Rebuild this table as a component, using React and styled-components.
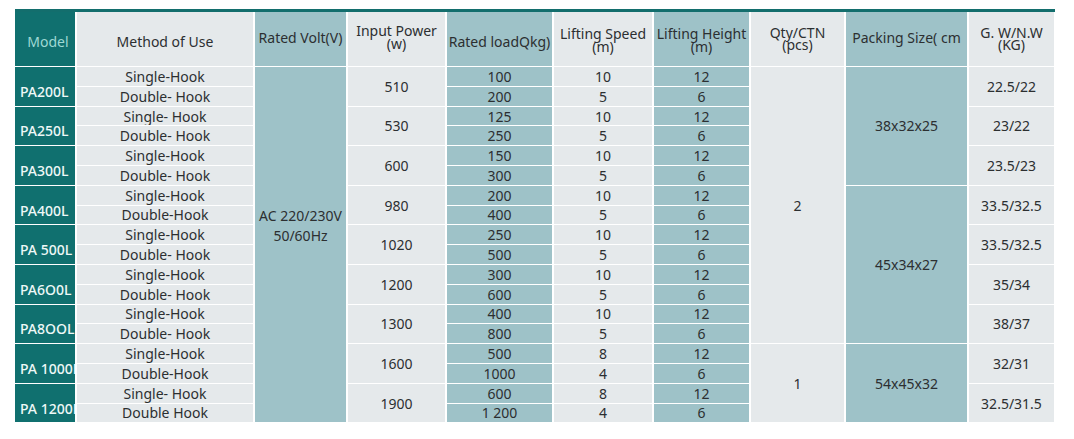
import React from "react";
import styled, { createGlobalStyle } from "styled-components";

const GlobalStyle = createGlobalStyle`
    body {
        margin: 0;
        background: #ffffff;
        font-family: "Noto Sans", "Open Sans", sans-serif;
    }
`;

const tones = {
    dark: "#10706f",
    light: "#e5e9eb",
    teal: "#9ec2c8",
};

const Page = styled.div`
    padding: 9px 0 0 15px;
    width: 1040px;
`;

const Sheet = styled.div`
    display: grid;
    grid-template-columns: 60px 176px 91px 97px 105px 98px 95px 93px 121px 85px;
    grid-template-rows: 54px repeat(18, 18.8px);
    column-gap: 2px;
    row-gap: 1px;
    border-top: 3px solid #136e6d;
    background: #ffffff;
`;

const Cell = styled.div`
    grid-column: ${({ $col }) => $col};
    grid-row: ${({ $row }) => $row} / span ${({ $span }) => $span || 1};
    background: ${({ $tone }) => tones[$tone]};
    color: #2c2f31;
    font-size: 14px;
    line-height: 19px;
    display: flex;
    align-items: center;
    justify-content: center;
    text-align: center;
    white-space: nowrap;
    overflow: hidden;
    padding-top: ${({ $top }) => $top || 0}px;
    padding-bottom: ${({ $bottom }) => $bottom || 0}px;
    box-sizing: border-box;
`;

const HeadCell = styled(Cell)`
    line-height: 12.5px;
    flex-direction: column;
    color: ${({ $tone }) => ($tone === "dark" ? "#9fd8d4" : "#2c2f31")};
    padding-left: ${({ $left }) => $left || 0}px;
`;

const ModelCell = styled(Cell)`
    justify-content: flex-start;
    padding-left: 5px;
    padding-top: 10px;
    color: #eef8f7;
    font-weight: 500;
`;

const VoltText = styled.div`
    line-height: 20px;
`;

const headers = [
    { lines: ["Model"], tone: "dark", top: 6, left: 6 },
    { lines: ["Method of Use"], tone: "light", top: 6 },
    { lines: ["Rated Volt(V)"], tone: "teal", bottom: 2 },
    { lines: ["Input Power", "(w)"], tone: "light", bottom: 3 },
    { lines: ["Rated loadQkg)"], tone: "teal", top: 6 },
    { lines: ["Lifting Speed", "(m)"], tone: "light", top: 3 },
    { lines: ["Lifting Height", "(m)"], tone: "teal", top: 3 },
    { lines: ["Qty/CTN", "(pcs)"], tone: "light" },
    { lines: ["Packing Size( cm"], tone: "teal", bottom: 2 },
    { lines: ["G. W/N.W", "(KG)"], tone: "light" },
];

const models = [
    { name: "PA200L", power: "510", gw: "22.5/22", hooks: ["Single-Hook", "Double- Hook"], loads: ["100", "200"], speeds: ["10", "5"] },
    { name: "PA250L", power: "530", gw: "23/22", hooks: ["Single- Hook", "Double- Hook"], loads: ["125", "250"], speeds: ["10", "5"] },
    { name: "PA300L", power: "600", gw: "23.5/23", hooks: ["Single-Hook", "Double- Hook"], loads: ["150", "300"], speeds: ["10", "5"] },
    { name: "PA400L", power: "980", gw: "33.5/32.5", hooks: ["Single-Hook", "Double-Hook"], loads: ["200", "400"], speeds: ["10", "5"] },
    { name: "PA 500L", power: "1020", gw: "33.5/32.5", hooks: ["Single-Hook", "Double- Hook"], loads: ["250", "500"], speeds: ["10", "5"] },
    { name: "PA6O0L", power: "1200", gw: "35/34", hooks: ["Single-Hook", "Double- Hook"], loads: ["300", "600"], speeds: ["10", "5"] },
    { name: "PA8OOL", power: "1300", gw: "38/37", hooks: ["Single-Hook", "Double- Hook"], loads: ["400", "800"], speeds: ["10", "5"] },
    { name: "PA 1000L", power: "1600", gw: "32/31", hooks: ["Single-Hook", "Double-Hook"], loads: ["500", "1000"], speeds: ["8", "4"] },
    { name: "PA 1200L", power: "1900", gw: "32.5/31.5", hooks: ["Single- Hook", "Double Hook"], loads: ["600", "1 200"], speeds: ["8", "4"] },
];

const packing = [
    { size: "38x32x25", row: 2, span: 6 },
    { size: "45x34x27", row: 8, span: 8 },
    { size: "54x45x32", row: 16, span: 4 },
];

const quantities = [
    { qty: "2", row: 2, span: 14 },
    { qty: "1", row: 16, span: 4 },
];

function modelRows(model, i) {
    const row = 2 + i * 2;
    return (
        <React.Fragment key={model.name}>
            <ModelCell $col={1} $row={row} $span={2} $tone="dark">{model.name}</ModelCell>
            {model.hooks.map((hook, j) => (
                <Cell key={"h" + j} $col={2} $row={row + j} $tone="light">{hook}</Cell>
            ))}
            <Cell $col={4} $row={row} $span={2} $tone="light">{model.power}</Cell>
            {model.loads.map((load, j) => (
                <Cell key={"l" + j} $col={5} $row={row + j} $tone="teal">{load}</Cell>
            ))}
            {model.speeds.map((speed, j) => (
                <Cell key={"s" + j} $col={6} $row={row + j} $tone="light">{speed}</Cell>
            ))}
            <Cell $col={7} $row={row} $tone="teal">12</Cell>
            <Cell $col={7} $row={row + 1} $tone="teal">6</Cell>
            <Cell $col={10} $row={row} $span={2} $tone="light">{model.gw}</Cell>
        </React.Fragment>
    );
}

export default function App() {
    return (
        <Page>
            <GlobalStyle />
            <Sheet>
                {headers.map((h, i) => (
                    <HeadCell key={h.lines[0]} $col={i + 1} $row={1} $tone={h.tone} $top={h.top} $bottom={h.bottom} $left={h.left}>
                        {h.lines.map((line) => (
                            <span key={line}>{line}</span>
                        ))}
                    </HeadCell>
                ))}
                {models.map(modelRows)}
                <Cell $col={3} $row={2} $span={18} $tone="teal" $bottom={38}>
                    <VoltText>
                        AC 220/230V
                        <br />
                        50/60Hz
                    </VoltText>
                </Cell>
                {quantities.map((q) => (
                    <Cell key={q.qty} $col={8} $row={q.row} $span={q.span} $tone="light">{q.qty}</Cell>
                ))}
                {packing.map((p) => (
                    <Cell key={p.size} $col={9} $row={p.row} $span={p.span} $tone="teal">{p.size}</Cell>
                ))}
            </Sheet>
        </Page>
    );
}
